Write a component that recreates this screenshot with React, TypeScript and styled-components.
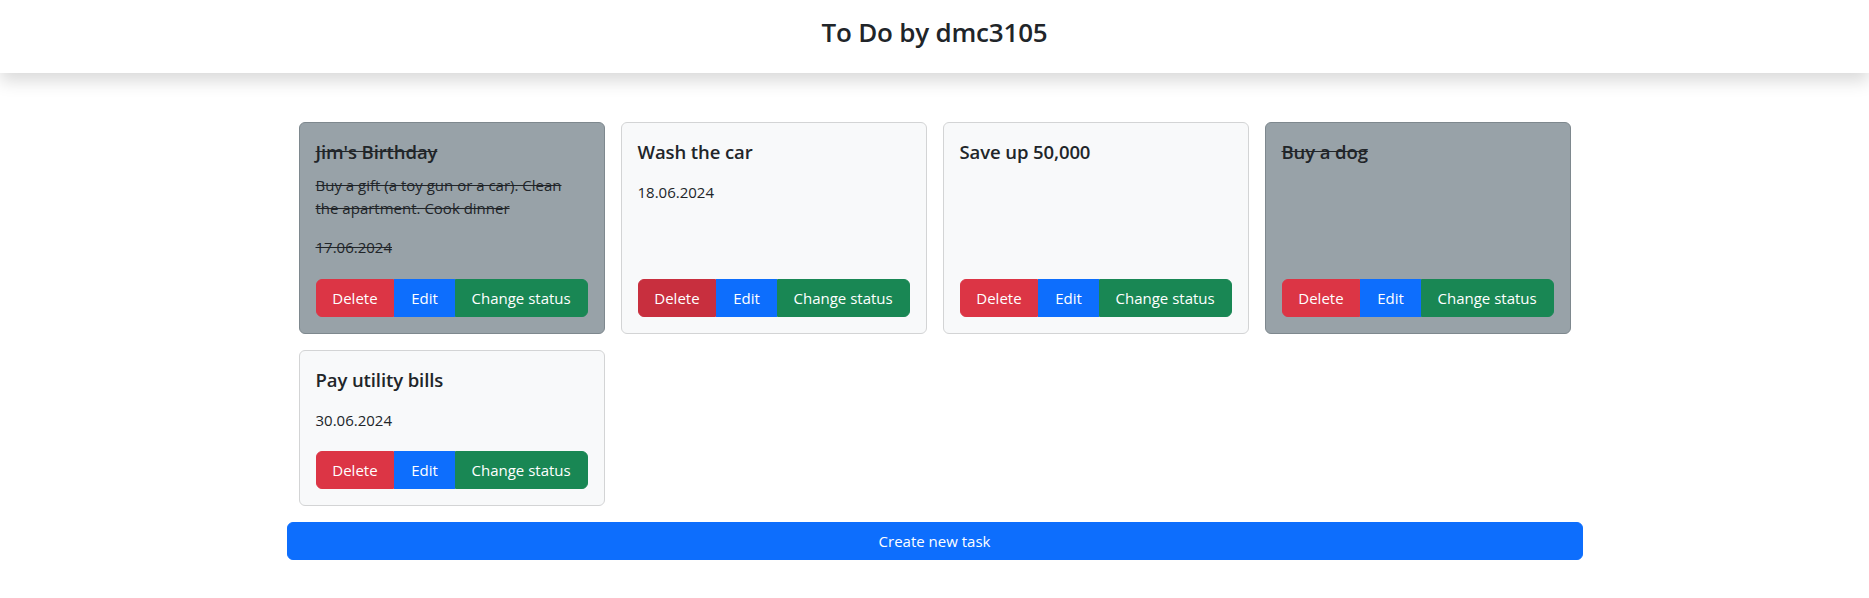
import React from "react";
import styled, { createGlobalStyle } from "styled-components";

const GlobalStyle = createGlobalStyle`
  html, body {
    margin: 0;
    padding: 0;
    background: #ffffff;
    color: #212529;
    font-family: "Open Sans", "Noto Sans", "Liberation Sans", sans-serif;
    font-size: 16px;
    line-height: 1.5;
  }
  * { box-sizing: border-box; }
`;

const Header = styled.header`
  background: #fff;
  box-shadow: 0 8px 16px rgba(0, 0, 0, 0.15);
  padding: 16px 0 24px;
  display: flex;
  justify-content: center;
`;

const Title = styled.h1`
  margin: 0;
  font-size: 26px;
  font-weight: 600;
  line-height: 33px;
  letter-spacing: -0.2px;
`;

const Container = styled.main`
  max-width: 1320px;
  margin: 0 auto;
  padding: 49px 12px 0;
`;

const CardList = styled.div`
  display: flex;
  flex-wrap: wrap;
  gap: 16px;
  padding: 0 12px;
`;

const Card = styled.div<{ $done?: boolean }>`
  width: 306px;
  display: flex;
  flex-direction: column;
  background: ${(p) => (p.$done ? "#98a2a8" : "#f8f9fa")};
  border: 1px solid ${(p) => (p.$done ? "#7e888e" : "#d3d4d5")};
  border-radius: 6px;
`;

const CardBody = styled.div`
  flex: 1;
  display: flex;
  flex-direction: column;
  padding: 16px;
`;

const CardTitle = styled.h5<{ $done?: boolean }>`
  margin: 0;
  font-size: 18.5px;
  font-weight: 600;
  line-height: 25px;
  letter-spacing: -0.1px;
  text-decoration: ${(p) => (p.$done ? "line-through" : "none")};
`;

const CardText = styled.p<{ $done?: boolean }>`
  margin: 10px 0 0;
  font-size: 15px;
  line-height: 22.5px;
  text-decoration: ${(p) => (p.$done ? "line-through" : "none")};
`;

const DateText = styled.p<{ $done?: boolean }>`
  margin: 17px 0 20px;
  font-size: 15px;
  line-height: 22.5px;
  text-decoration: ${(p) => (p.$done ? "line-through" : "none")};
`;

const BtnGroup = styled.div`
  margin-top: auto;
  display: flex;
  width: 100%;
`;

const Btn = styled.button<{ $bg: string }>`
  flex: 1 1 auto;
  font-family: inherit;
  font-size: 15px;
  line-height: 24px;
  padding: 6px 12px;
  color: #fff;
  background: ${(p) => p.$bg};
  border: 1px solid ${(p) => p.$bg};
  border-radius: 0;
  cursor: pointer;
  &:first-child {
    border-radius: 6px 0 0 6px;
  }
  &:last-child {
    border-radius: 0 6px 6px 0;
  }
`;

const CreateButton = styled.button`
  display: block;
  width: 100%;
  margin-top: 16px;
  font-family: inherit;
  font-size: 15px;
  line-height: 24px;
  padding: 6px 12px;
  color: #fff;
  background: #0d6efd;
  border: 1px solid #0d6efd;
  border-radius: 6px;
`;

type Task = {
  title: string;
  description?: string;
  date: string;
  done: boolean;
  hoverDelete?: boolean;
};

const tasks: Task[] = [
  {
    title: "Jim's Birthday",
    description: "Buy a gift (a toy gun or a car). Clean the apartment. Cook dinner",
    date: "17.06.2024",
    done: true,
  },
  { title: "Wash the car", date: "18.06.2024", done: false, hoverDelete: true },
  { title: "Save up 50,000", date: "", done: false },
  { title: "Buy a dog", date: "", done: true },
  { title: "Pay utility bills", date: "30.06.2024", done: false },
];

export default function App() {
  return (
    <>
      <GlobalStyle />
      <Header>
        <Title>To Do by dmc3105</Title>
      </Header>
      <Container>
        <CardList>
          {tasks.map((t) => (
            <Card key={t.title} $done={t.done}>
              <CardBody>
                <CardTitle $done={t.done}>{t.title}</CardTitle>
                {t.description && <CardText $done={t.done}>{t.description}</CardText>}
                {t.date && <DateText $done={t.done}>{t.date}</DateText>}
                <BtnGroup>
                  <Btn $bg={t.hoverDelete ? "#c82f3e" : "#dc3545"}>Delete</Btn>
                  <Btn $bg="#0d6efd">Edit</Btn>
                  <Btn $bg="#198754">Change status</Btn>
                </BtnGroup>
              </CardBody>
            </Card>
          ))}
        </CardList>
        <CreateButton>Create new task</CreateButton>
      </Container>
    </>
  );
}
